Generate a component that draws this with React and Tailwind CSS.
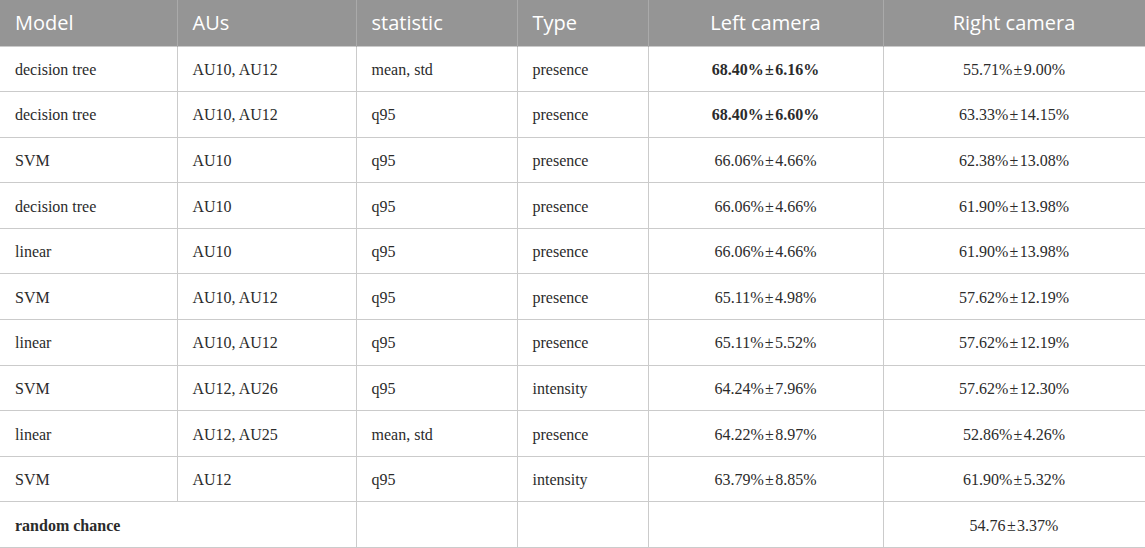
import React from "react";

const rows = [
  ["decision tree", "AU10, AU12", "mean, std", "presence", "68.40%\u200a±\u200a6.16%", "55.71%\u200a±\u200a9.00%", true],
  ["decision tree", "AU10, AU12", "q95", "presence", "68.40%\u200a±\u200a6.60%", "63.33%\u200a±\u200a14.15%", true],
  ["SVM", "AU10", "q95", "presence", "66.06%\u200a±\u200a4.66%", "62.38%\u200a±\u200a13.08%"],
  ["decision tree", "AU10", "q95", "presence", "66.06%\u200a±\u200a4.66%", "61.90%\u200a±\u200a13.98%"],
  ["linear", "AU10", "q95", "presence", "66.06%\u200a±\u200a4.66%", "61.90%\u200a±\u200a13.98%"],
  ["SVM", "AU10, AU12", "q95", "presence", "65.11%\u200a±\u200a4.98%", "57.62%\u200a±\u200a12.19%"],
  ["linear", "AU10, AU12", "q95", "presence", "65.11%\u200a±\u200a5.52%", "57.62%\u200a±\u200a12.19%"],
  ["SVM", "AU12, AU26", "q95", "intensity", "64.24%\u200a±\u200a7.96%", "57.62%\u200a±\u200a12.30%"],
  ["linear", "AU12, AU25", "mean, std", "presence", "64.22%\u200a±\u200a8.97%", "52.86%\u200a±\u200a4.26%"],
  ["SVM", "AU12", "q95", "intensity", "63.79%\u200a±\u200a8.85%", "61.90%\u200a±\u200a5.32%"],
];

const td = "border border-[#cbcbcb] px-[15px] pt-[2px] h-[45.6px] align-middle";

export default function App() {
  return (
    <div className="w-[1145px] h-[548px] bg-white overflow-hidden">
      <table
        className="w-[1145px] border-collapse table-fixed text-[16px] text-[#2b2b2b]"
        style={{ fontFamily: '"Liberation Serif", "Times New Roman", serif' }}
      >
        <colgroup>
          <col className="w-[177px]" />
          <col className="w-[179px]" />
          <col className="w-[161px]" />
          <col className="w-[131px]" />
          <col className="w-[235px]" />
          <col className="w-[262px]" />
        </colgroup>
        <thead>
          <tr
            className="bg-[#959595] text-white text-[20px] h-[46px]"
            style={{ fontFamily: '"Open Sans", "Noto Sans", sans-serif' }}
          >
            <th className="border-r border-[#aaaaaa] px-[15px] text-left font-normal">Model</th>
            <th className="border-r border-[#aaaaaa] px-[15px] text-left font-normal">AUs</th>
            <th className="border-r border-[#aaaaaa] px-[15px] text-left font-normal">statistic</th>
            <th className="border-r border-[#aaaaaa] px-[15px] text-left font-normal">Type</th>
            <th className="border-r border-[#aaaaaa] px-[15px] text-center font-normal">Left camera</th>
            <th className="border-r border-[#aaaaaa] px-[15px] text-center font-normal">Right camera</th>
          </tr>
        </thead>
        <tbody>
          {rows.map((r, i) => (
            <tr key={i}>
              <td className={`${td} border-l-0`}>{r[0]}</td>
              <td className={td}>{r[1]}</td>
              <td className={td}>{r[2]}</td>
              <td className={td}>{r[3]}</td>
              <td className={`${td} text-center ${r[6] ? "font-bold" : ""}`}>{r[4]}</td>
              <td className={`${td} text-center`}>{r[5]}</td>
            </tr>
          ))}
          <tr>
            <td colSpan={2} className={`${td} border-l-0 font-bold`}>random chance</td>
            <td className={td}></td>
            <td className={td}></td>
            <td className={td}></td>
            <td className={`${td} text-center`}>54.76{"\u200a±\u200a"}3.37%</td>
          </tr>
        </tbody>
      </table>
    </div>
  );
}
